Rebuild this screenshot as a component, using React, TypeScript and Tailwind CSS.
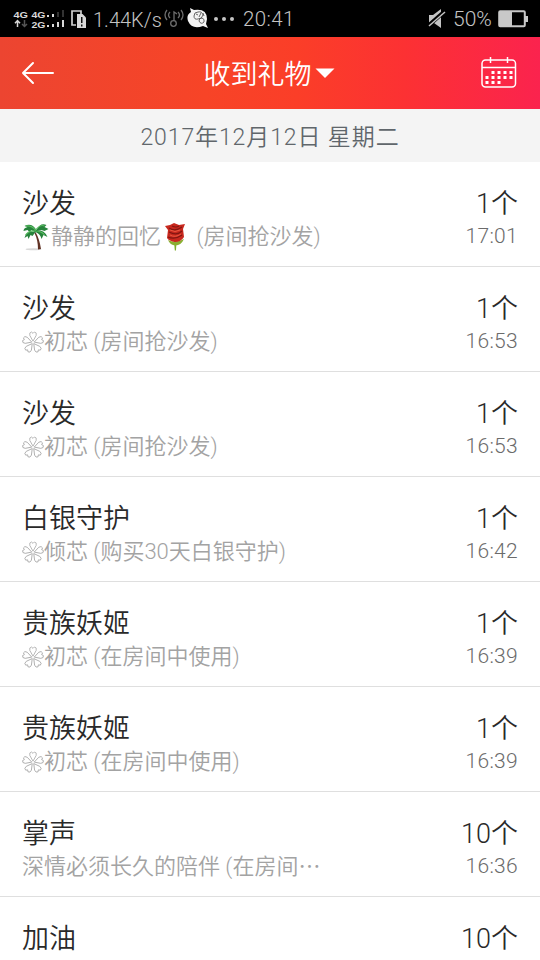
import type { ReactNode } from "react"

type Gift = {
    name: string
    count: number
    time?: string
    from?: ReactNode
}

function Flower() {
    return (
        <svg width="22" height="22" viewBox="0 0 22 22" fill="none" stroke="#a6a6a6" strokeWidth="0.8" strokeLinejoin="round" className="shrink-0">
            {[0, 72, 144, 216, 288].map((deg) => (
                <path key={deg} transform={`rotate(${deg} 11 11.5)`} d="M11 10.2 L7.8 4.4 Q7 1.2 9.6 1 L11 2.4 L12.4 1 Q15 1.2 14.2 4.4 Z" />
            ))}
        </svg>
    )
}

function PalmTree() {
    return (
        <svg width="29" height="28" viewBox="0 0 28 28" className="shrink-0">
            <ellipse cx="11" cy="26.3" rx="8" ry="1" fill="#d8d8d8" />
            <path d="M13 9 Q17 16 18.5 26 L15.5 26.5 Q15.5 17 12 10Z" fill="#613224" />
            <path d="M14 7 Q9-1 2 3 L5 4 Q1 5 1 8 L5 7 L7 9 L9 7 L12 9 Q4 7 2 15 L5 13 L6 16 L8 12 L10 13 L13 9 Q18 11 19 16 L21 12 L25 14 Q22 7 15 7 L19 7 L22 8 L26 6 L22 4 L24 2 Q18-1 14 7Z" fill="#27833c" />
            <path d="M3 3 Q9 2 13 7 Q18 1 22 3 M3 12 Q7 7 13 8 Q19 8 22 12" stroke="#58b95f" strokeWidth="1.1" fill="none" />
        </svg>
    )
}

function Rose() {
    return (
        <svg width="28" height="28" viewBox="0 0 28 28" className="shrink-0">
            <path d="M13 18 H15.5 L15 27.5 H13.8Z" fill="#7cae2d" />
            <path d="M7 17 Q14 21 23 16 Q20 22.500 14.500 22.500 Q9 22 7 17Z" fill="#8aae31" />
            <path d="M4 3 L9 2 L13 0 L18 2 L24 1 L22 6 L23 14 Q20 19 14 19 Q8 18 6 15 L7 7Z" fill="#c8281e" />
            <path d="M8 5 Q14 9 21 4 M8 9 Q16 13 21 8 M7 14 Q14 17 21 12 M11 3 Q15 5 18 3" stroke="#821711" strokeWidth="1.2" fill="none" />
            <path d="M9 7 Q14 10 19 7 M9 12 Q14 15 20 11" stroke="#ee5c43" strokeWidth="0.9" fill="none" />
        </svg>
    )
}

const gifts: Gift[] = [
    { name: "沙发", count: 1, time: "17:01", from: <><PalmTree /><span>静静的回忆</span><Rose /><span className="ml-[2px]"> (房间抢沙发)</span></> },
    { name: "沙发", count: 1, time: "16:53", from: <><Flower /><span>初芯 (房间抢沙发)</span></> },
    { name: "沙发", count: 1, time: "16:53", from: <><Flower /><span>初芯 (房间抢沙发)</span></> },
    { name: "白银守护", count: 1, time: "16:42", from: <><Flower /><span>倾芯 (购买30天白银守护)</span></> },
    { name: "贵族妖姬", count: 1, time: "16:39", from: <><Flower /><span>初芯 (在房间中使用)</span></> },
    { name: "贵族妖姬", count: 1, time: "16:39", from: <><Flower /><span>初芯 (在房间中使用)</span></> },
    { name: "掌声", count: 10, time: "16:36", from: <span>深情必须长久的陪伴 (在房间⋯</span> },
    { name: "加油", count: 10 },
]

function StatusBar() {
    return (
        <div className="flex h-[37px] shrink-0 items-center bg-black leading-none text-[#c4c4c4]">
            <svg width="78" height="37" viewBox="0 0 78 37" className="ml-[13px]" fill="#d8d8d8">
                <g fontFamily="Liberation Sans" fontSize="9.5" fontWeight="bold">
                    <text x="0.5" y="17.5" textLength="14.5" lengthAdjust="spacingAndGlyphs">4G</text>
                    <text x="18.5" y="17.5" textLength="14" lengthAdjust="spacingAndGlyphs">4G</text>
                    <text x="18.5" y="27.5" textLength="14" lengthAdjust="spacingAndGlyphs">2G</text>
                </g>
                <path d="M34 15h2v2h-2zM39 14h2v3h-2zM34 25h2v2h-2zM39 24h2v3h-2zM44 22h2v5h-2zM49 20h2v7h-2z" />
                <path d="M44 12h2v5h-2zM49 10h2v7h-2z" fill="#333" />
                <path d="M4.5 27V21M2 23.2L4.5 20.5L7 23.2" stroke="#d8d8d8" strokeWidth="1.5" fill="none" />
                <path d="M11.5 20V26M9 24L11.5 26.5L14 24" stroke="#555" strokeWidth="1.5" fill="none" />
                <path d="M63 25H59V11H68V15" stroke="#d0d0d0" strokeWidth="1.7" fill="none" />
                <path d="M64 14h5.500l3.500 3.500V28H64z" />
                <path d="M68 17h1.500v6H68zM68 24.500h1.500v2H68z" fill="#111" />
            </svg>
            <span className="ml-[2px] w-[70px] pt-[2px] text-[20px] font-light whitespace-nowrap">1.44K/s</span>
            <svg width="22" height="22" viewBox="0 0 22 22" fill="none" stroke="#6d6d6d" strokeWidth="1.3">
                <path d="M4 2Q0 7 4 12M7 4Q4 7 7 10M18 2Q22 7 18 12M15 4Q18 7 15 10M11 13V4L14 6" />
                <circle cx="10.5" cy="15.5" r="2.8" />
            </svg>
            <svg width="22" height="22" viewBox="0 0 22 22" className="ml-[2px]">
                <path d="M3 0L7 2Q20 0 20 11L19 16L21 20L16 18Q5 22 1 13Q-1 7 4 4Z" fill="#f4f4f4" />
                <path d="M7 8Q7 4 11 4Q15 3 16 7Q15 11 11 11Q7 12 7 8M12 13Q12 10 15 10Q18 11 17 14Q14 17 12 13M9 6l2 1M14 5l-2 4M16 5l1 3" stroke="#555" strokeWidth="0.9" fill="none" />
            </svg>
            <div className="ml-[5px] flex gap-[4px]">
                <i className="size-[4px] rounded-full bg-[#c4c4c4]" />
                <i className="size-[4px] rounded-full bg-[#c4c4c4]" />
                <i className="size-[4px] rounded-full bg-[#c4c4c4]" />
            </div>
            <span className="ml-[9px] pt-[2px] text-[20.5px] font-light tracking-[0.4px]">20:41</span>
            <svg width="18" height="20" viewBox="0 0 18 20" className="ml-auto">
                <path d="M1 6H5L13 0V19L6 14H1Z" fill="#c4c4c4" />
                <path d="M0 17L17 2" stroke="#000" strokeWidth="4" />
                <path d="M1 17L17 3" stroke="#c4c4c4" strokeWidth="1.5" />
            </svg>
            <span className="ml-[7px] w-[42px] pt-[2px] text-[21px] font-light">50%</span>
            <svg width="30" height="18" viewBox="0 0 30 18" className="ml-[3px] mr-[12px]">
                <rect x="1.2" y="1.2" width="25.6" height="15" rx="1" fill="none" stroke="#c8c8c8" strokeWidth="2" />
                <path d="M2 2H14V16H2ZM27 6H30V12H27Z" fill="#c8c8c8" />
            </svg>
        </div>
    )
}

function Header() {
    return (
        <header className="flex h-[72px] shrink-0 items-center justify-between bg-[linear-gradient(90deg,#ec4531_0%,#f74427_38%,#fb3e28_55%,#fc3133_75%,#fb234e_100%)] pr-[23px] pl-[21px] text-white">
            <svg width="36" height="24" viewBox="0 0 36 24" fill="none" stroke="white" strokeWidth="2" strokeLinecap="round" strokeLinejoin="round">
                <path d="M32 12H2M12 2L2 12L12 22" />
            </svg>
            <div className="flex items-center gap-[3px]">
                <h1 className="pt-[3px] text-[27px] leading-[40px] font-[350]">收到礼物</h1>
                <svg width="20" height="11" viewBox="0 0 20 11" fill="white">
                    <path d="M0.5 0.5H19.5L10 10Z" />
                </svg>
            </div>
            <svg width="36" height="34" viewBox="0 0 36 34" fill="none" stroke="white" strokeWidth="1.5">
                <rect x="1" y="4" width="33.5" height="27" rx="3.5" />
                <path d="M1 11.5H34.5M9.5 1V7M26.5 1V7" />
                <path d="M10.500 16.500H32M4.500 21.500H32M4.500 26.500H20" strokeWidth="3" strokeDasharray="3 3" />
            </svg>
        </header>
    )
}

export default function App() {
    return (
        <main className="flex h-[960px] w-[540px] flex-col overflow-hidden bg-white font-[Roboto,'Noto_Sans_CJK_SC',sans-serif]">
            <StatusBar />
            <Header />
            <div className="flex h-[53px] shrink-0 items-center justify-center bg-[#f4f4f4] pt-[6px] text-[23px] font-[350] tracking-[0.9px] text-[#60666b]">
                2017年12月12日 星期二
            </div>
            <ul>
                {gifts.map((gift, i) => (
                    <li key={i} className="flex h-[105px] justify-between border-b border-[#dfdfdf] px-[22px] pt-[24px] font-[350]">
                        <div>
                            <h2 className="text-[27px] leading-[37px] text-[#292929]">{gift.name}</h2>
                            {gift.from && <p className="flex h-[28px] items-center text-[22px] leading-[28px] whitespace-pre text-[#a3a3a3]">{gift.from}</p>}
                        </div>
                        <div className="text-right">
                            <p className="text-[27px] leading-[36px] text-[#292929]">{gift.count}个</p>
                            {gift.time && <p className="text-[21px] leading-[28px] tracking-[0.3px] text-[#6b6b6b]">{gift.time}</p>}
                        </div>
                    </li>
                ))}
            </ul>
        </main>
    )
}
